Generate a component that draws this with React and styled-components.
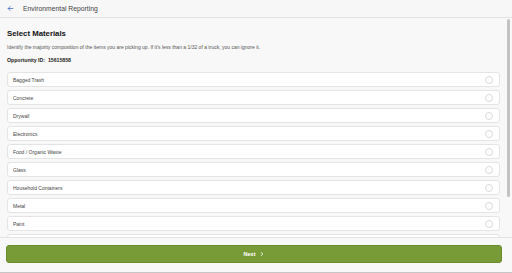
import React from 'react';
import styled, { createGlobalStyle } from 'styled-components';
import { ChevronRight } from 'lucide-react';

const GlobalStyle = createGlobalStyle`
  html, body, #root {
    margin: 0;
    padding: 0;
    height: 100%;
  }
  body {
    font-family: 'Liberation Sans', Arial, sans-serif;
    background: #f8f8f8;
  }
`;

const Page = styled.div`
  height: 100vh;
  display: flex;
  flex-direction: column;
  background: #f8f8f8;
`;

const Header = styled.header`
  height: 17px;
  flex-shrink: 0;
  display: flex;
  align-items: center;
  border-bottom: 1px solid #e3e3e3;
  background: #f7f7f7;
`;

const BackButton = styled.button`
  width: 14px;
  height: 17px;
  margin-left: 3px;
  margin-right: 6px;
  padding: 0;
  border: none;
  background: none;
  display: flex;
  align-items: center;
  justify-content: center;
  color: #3559c7;
`;

const Title = styled.h1`
  margin: 0;
  font-size: 6.8px;
  font-weight: 400;
  color: #444;
`;

const Main = styled.main`
  flex: 1;
  position: relative;
  overflow: hidden;
  padding: 11px 12px 0 7px;
`;

const Heading = styled.h2`
  margin: 0;
  font-size: 7.8px;
  line-height: 9px;
  font-weight: 700;
  color: #111;
`;

const Description = styled.p`
  margin: 6px 0 0;
  font-size: 5px;
  line-height: 7px;
  color: #555;
`;

const Opportunity = styled.p`
  margin: 6px 0 0;
  font-size: 5.2px;
  line-height: 7px;
  font-weight: 700;
  color: #222;
`;

const List = styled.ul`
  list-style: none;
  margin: 8px 0 0;
  padding: 0;
  display: flex;
  flex-direction: column;
  gap: 3px;
`;

const Item = styled.li`
  height: 15px;
  box-sizing: border-box;
  display: flex;
  align-items: center;
  justify-content: space-between;
  padding: 0 6px 0 5px;
  background: #fff;
  border: 1px solid #e4e4e4;
  border-radius: 3px;
  font-size: 5px;
  color: #444;
`;

const Radio = styled.span`
  width: 8px;
  height: 8px;
  box-sizing: border-box;
  border: 1px solid #d9d9d9;
  border-radius: 50%;
  background: #fff;
`;

const ScrollThumb = styled.div`
  position: absolute;
  top: 1px;
  right: 2px;
  width: 3px;
  height: 178px;
  border-radius: 2px;
  background: #c3c3c3;
`;

const Footer = styled.footer`
  height: 36px;
  flex-shrink: 0;
  box-sizing: border-box;
  padding: 7px 10px 0 6px;
  border-top: 1px solid #e3e3e3;
  border-bottom: 1px solid #c6c6c6;
  background: #f8f8f8;
`;

const NextButton = styled.button`
  width: 100%;
  height: 18px;
  display: flex;
  align-items: center;
  justify-content: center;
  gap: 3px;
  padding: 0;
  border: 1px solid #6a8c2b;
  border-radius: 3px;
  background: #789b38;
  color: #fff;
  font-family: 'Liberation Sans', Arial, sans-serif;
  font-size: 5.6px;
  font-weight: 700;
`;

const materials = [
  'Bagged Trash',
  'Concrete',
  'Drywall',
  'Electronics',
  'Food / Organic Waste',
  'Glass',
  'Household Containers',
  'Metal',
  'Paint',
  'Plastic',
];

const BackIcon = () => (
  <svg width="7" height="7" viewBox="0 0 24 24" fill="none" stroke="currentColor" strokeWidth="2.4" strokeLinecap="round" strokeLinejoin="round">
    <path d="M20 12H4" />
    <path d="M11 5l-7 7 7 7" />
  </svg>
);

const App = () => (
  <Page>
    <GlobalStyle />
    <Header>
      <BackButton aria-label="Back">
        <BackIcon />
      </BackButton>
      <Title>Environmental Reporting</Title>
    </Header>
    <Main>
      <Heading>Select Materials</Heading>
      <Description>
        Identify the majority composition of the items you are picking up. If it's less than a 1/32 of a truck, you can ignore it.
      </Description>
      <Opportunity>Opportunity ID:&nbsp; 15615858</Opportunity>
      <List>
        {materials.map((m) => (
          <Item key={m}>
            {m}
            <Radio />
          </Item>
        ))}
      </List>
      <ScrollThumb />
    </Main>
    <Footer>
      <NextButton>
        Next
        <ChevronRight size={6} strokeWidth={3.5} />
      </NextButton>
    </Footer>
  </Page>
);

export default App;
